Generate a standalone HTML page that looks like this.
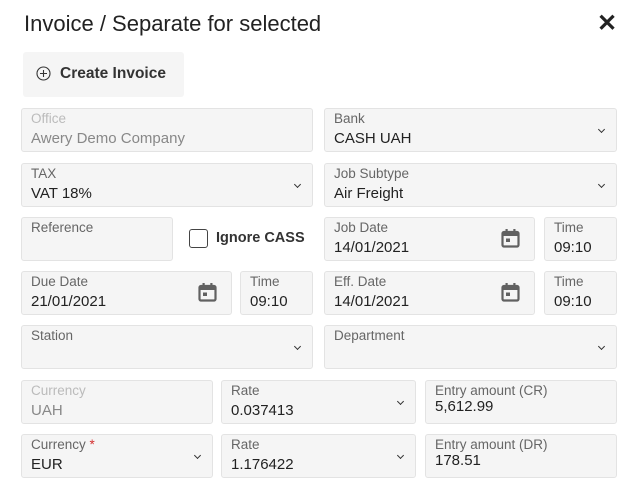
<!DOCTYPE html><html><head><style>
body{margin:0;width:639px;height:496px;background:#fff;font-family:"Liberation Sans",sans-serif;position:relative;overflow:hidden;color:#222}
.a{position:absolute}
.f{position:absolute;box-sizing:border-box;border:1px solid #e3e3e3;background:#f5f5f5;border-radius:3px}
.l{position:absolute;left:9px;top:2px;font-size:13.5px;color:#666}
.v{position:absolute;left:9px;top:21px;font-size:15px;color:#222}
.d .l{color:#bbb}.d .v{color:#888}
.e .v{top:17px}
.c{position:absolute;right:12px;top:18px;width:4px;height:4px;border-right:1.8px solid #333;border-bottom:1.8px solid #333;transform:rotate(45deg)}
.cal{position:absolute;width:19px;height:20px}
</style></head><body>
<div class="a" style="left:24px;top:11px;font-size:22px;color:#222">Invoice / Separate for selected</div>
<div class="a" style="left:597px;top:9px;font-size:24px;font-weight:bold">✕</div>
<div class="a" style="left:23px;top:52px;width:161px;height:45px;background:#f5f5f5;border-radius:3px"></div>
<svg class="a" style="left:36px;top:66px" width="15" height="15"><circle cx="7.5" cy="7.5" r="6.5" fill="none" stroke="#333" stroke-width="1.1"/><path d="M7.5 4v7M4 7.5h7" stroke="#333" stroke-width="1.1"/></svg>
<div class="a" style="left:60px;top:65px;font-size:15.5px;font-weight:bold;color:#333">Create Invoice</div>

<div class="f d" style="left:21px;top:108px;width:292px;height:44px"><div class="l">Office</div><div class="v">Awery Demo Company</div></div>
<div class="f" style="left:324px;top:108px;width:293px;height:44px"><div class="l">Bank</div><div class="v">CASH UAH</div><div class="c"></div></div>
<div class="f" style="left:21px;top:163px;width:292px;height:44px"><div class="l">TAX</div><div class="v">VAT 18%</div><div class="c"></div></div>
<div class="f" style="left:324px;top:163px;width:293px;height:44px"><div class="l">Job Subtype</div><div class="v">Air Freight</div><div class="c"></div></div>

<div class="f" style="left:21px;top:217px;width:152px;height:44px"><div class="l">Reference</div></div>
<div class="a" style="left:189px;top:229px;width:17px;height:17px;border:1.5px solid #444;border-radius:3px"></div>
<div class="a" style="left:216px;top:230px;font-size:14.5px;font-weight:bold;color:#333">Ignore CASS</div>
<div class="f" style="left:324px;top:217px;width:211px;height:44px"><div class="l">Job Date</div><div class="v">14/01/2021</div>
<svg class="cal" style="left:176px;top:10px" viewBox="0 0 19 20"><rect x="1.5" y="4" width="16" height="14.5" rx="1.5" fill="none" stroke="#616161" stroke-width="2.2"/><rect x="1.5" y="4" width="16" height="4" fill="#616161"/><rect x="4.5" y="1" width="2.2" height="3.5" fill="#616161"/><rect x="12.3" y="1" width="2.2" height="3.5" fill="#616161"/><rect x="5" y="10.5" width="4" height="3.5" fill="#616161"/></svg></div>
<div class="f" style="left:544px;top:217px;width:73px;height:44px"><div class="l">Time</div><div class="v">09:10</div></div>

<div class="f" style="left:21px;top:271px;width:211px;height:44px"><div class="l">Due Date</div><div class="v">21/01/2021</div>
<svg class="cal" style="left:176px;top:10px" viewBox="0 0 19 20"><rect x="1.5" y="4" width="16" height="14.5" rx="1.5" fill="none" stroke="#616161" stroke-width="2.2"/><rect x="1.5" y="4" width="16" height="4" fill="#616161"/><rect x="4.5" y="1" width="2.2" height="3.5" fill="#616161"/><rect x="12.3" y="1" width="2.2" height="3.5" fill="#616161"/><rect x="5" y="10.5" width="4" height="3.5" fill="#616161"/></svg></div>
<div class="f" style="left:240px;top:271px;width:73px;height:44px"><div class="l">Time</div><div class="v">09:10</div></div>
<div class="f" style="left:324px;top:271px;width:211px;height:44px"><div class="l">Eff. Date</div><div class="v">14/01/2021</div>
<svg class="cal" style="left:176px;top:10px" viewBox="0 0 19 20"><rect x="1.5" y="4" width="16" height="14.5" rx="1.5" fill="none" stroke="#616161" stroke-width="2.2"/><rect x="1.5" y="4" width="16" height="4" fill="#616161"/><rect x="4.5" y="1" width="2.2" height="3.5" fill="#616161"/><rect x="12.3" y="1" width="2.2" height="3.5" fill="#616161"/><rect x="5" y="10.5" width="4" height="3.5" fill="#616161"/></svg></div>
<div class="f" style="left:544px;top:271px;width:73px;height:44px"><div class="l">Time</div><div class="v">09:10</div></div>

<div class="f" style="left:21px;top:325px;width:292px;height:44px"><div class="l">Station</div><div class="c"></div></div>
<div class="f" style="left:324px;top:325px;width:293px;height:44px"><div class="l">Department</div><div class="c"></div></div>

<div class="f d" style="left:21px;top:380px;width:192px;height:44px"><div class="l">Currency</div><div class="v">UAH</div></div>
<div class="f" style="left:221px;top:380px;width:195px;height:44px"><div class="l">Rate</div><div class="v">0.037413</div><div class="c"></div></div>
<div class="f e" style="left:425px;top:380px;width:192px;height:44px"><div class="l">Entry amount (CR)</div><div class="v">5,612.99</div></div>

<div class="f" style="left:21px;top:434px;width:192px;height:44px"><div class="l">Currency <span style="color:#d32f2f">*</span></div><div class="v">EUR</div><div class="c"></div></div>
<div class="f" style="left:221px;top:434px;width:195px;height:44px"><div class="l">Rate</div><div class="v">1.176422</div><div class="c"></div></div>
<div class="f e" style="left:425px;top:434px;width:192px;height:44px"><div class="l">Entry amount (DR)</div><div class="v">178.51</div></div>
</body></html>
